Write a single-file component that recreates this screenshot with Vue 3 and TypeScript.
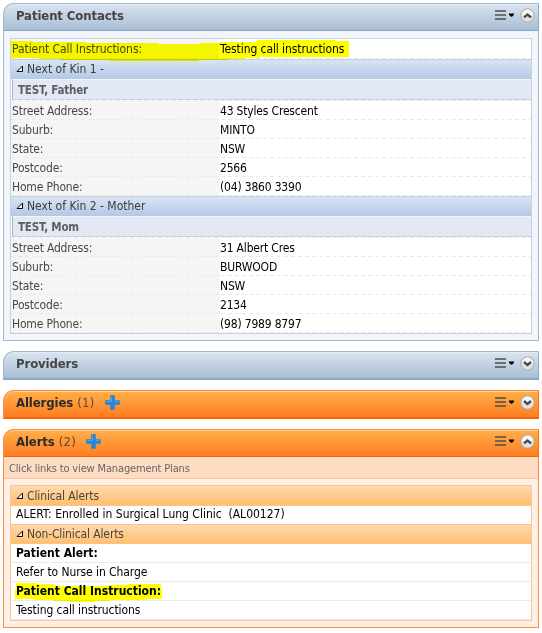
<script setup lang="ts">
interface Field { label: string; value: string }
interface Contact { title: string; name: string; fields: Field[] }

const contacts: Contact[] = [
  {
    title: 'Next of Kin 1 -',
    name: 'TEST, Father',
    fields: [
      { label: 'Street Address:', value: '43 Styles Crescent' },
      { label: 'Suburb:', value: 'MINTO' },
      { label: 'State:', value: 'NSW' },
      { label: 'Postcode:', value: '2566' },
      { label: 'Home Phone:', value: '(04) 3860 3390' },
    ],
  },
  {
    title: 'Next of Kin 2 - Mother',
    name: 'TEST, Mom',
    fields: [
      { label: 'Street Address:', value: '31 Albert Cres' },
      { label: 'Suburb:', value: 'BURWOOD' },
      { label: 'State:', value: 'NSW' },
      { label: 'Postcode:', value: '2134' },
      { label: 'Home Phone:', value: '(98) 7989 8797' },
    ],
  },
]

interface Panel { key: string; title: string; count?: string; tone: 'blue' | 'orange'; open: boolean }
const panels: Panel[] = [
  { key: 'contacts', title: 'Patient Contacts', tone: 'blue', open: true },
  { key: 'providers', title: 'Providers', tone: 'blue', open: false },
  { key: 'allergies', title: 'Allergies', count: '(1)', tone: 'orange', open: false },
  { key: 'alerts', title: 'Alerts', count: '(2)', tone: 'orange', open: true },
]
</script>

<template>
  <main class="page">
    <section v-for="p in panels" :key="p.key" class="panel" :class="[p.tone, p.key, { open: p.open }]">
      <header class="head">
        <h2>{{ p.title }}</h2>
        <span v-if="p.count" class="count">{{ p.count }}</span>
        <svg v-if="p.count" class="plus" width="15" height="15" viewBox="0 0 15 15">
          <path d="M5.500 .5h4v5h5v4h-5v5h-4v-5h-5v-4h5z" fill="#2087e0" stroke="#5f86a8" />
          <path d="M6.500 2v4.500h-4.500M10 6.500h3.500" fill="none" stroke="#45a8f0" />
        </svg>
        <svg class="menu" width="20" height="10" viewBox="0 0 20 10">
          <path d="M0 1h11M0 5h11M0 9h11" stroke="#4c4c50" stroke-width="1.300" />
          <path d="M14 3.500h5v1.200l-2 2h-1l-2-2z" fill="#000" />
        </svg>
        <svg class="toggle" width="15" height="15" viewBox="0 0 15 15">
          <circle cx="7.500" cy="7.500" r="6.700" fill="#e2e2e2" stroke="#aaa" />
          <path d="M2 7a5.500 5.500 0 0 1 11 0z" fill="#f6f6f6" />
          <path :d="p.open ? 'M4 9.400l3.500-2.900 3.500 2.900' : 'M4 6l3.500 2.900 3.500-2.900'" fill="none" stroke="#484848" stroke-width="2.300" />
        </svg>
      </header>

      <div v-if="p.key === 'contacts'" class="body">
        <div class="box">
          <div class="field first">
            <span class="label">Patient Call Instructions:</span><span class="value">Testing call instructions</span>
            <svg class="mark mark-top" width="338" height="21" viewBox="0 0 338 21">
              <path d="M0 1h22v1h24v0h29v1h23v0h49v1h42v-1h20v-1h37v-2h78v1h14v16h-89v1h-16v1h-16v1h-29v1H98v-1H49v-1H28v-1H0z" fill="#ff0" />
            </svg>
          </div>
          <template v-for="c in contacts" :key="c.title">
            <div class="group">
              <svg class="tri" width="8" height="8" viewBox="0 0 8 8"><path d="M1 6.500h5.500V1z" fill="#fff" stroke="#000" /></svg>
              <span>{{ c.title }}</span>
            </div>
            <div class="name"><span>{{ c.name }}</span></div>
            <div class="fields">
              <div v-for="f in c.fields" :key="f.label" class="field">
                <span class="label">{{ f.label }}</span><span class="value">{{ f.value }}</span>
              </div>
            </div>
          </template>
        </div>
      </div>

      <div v-if="p.key === 'alerts'" class="body">
        <p class="notice">Click links to view Management Plans</p>
        <div class="box">
          <div class="group">
            <svg class="tri" width="8" height="8" viewBox="0 0 8 8"><path d="M1 6.500h5.500V1z" fill="#fff" stroke="#000" /></svg>
            <span>Clinical Alerts</span>
          </div>
          <div class="clinical"><span>ALERT: Enrolled in Surgical Lung Clinic&nbsp; (AL00127)</span></div>
          <div class="group">
            <svg class="tri" width="8" height="8" viewBox="0 0 8 8"><path d="M1 6.500h5.500V1z" fill="#fff" stroke="#000" /></svg>
            <span>Non-Clinical Alerts</span>
          </div>
          <div class="line strong"><span>Patient Alert:</span></div>
          <div class="line"><span>Refer to Nurse in Charge</span></div>
          <div class="line strong">
            <span>Patient Call Instruction:</span>
            <svg class="mark mark-low" width="147" height="20" viewBox="0 0 147 20">
              <path d="M1 0h21v1h16v2h55v-1h20v-1h33v6h1v9h-15v1h-38v1H80v1H55v-1H39v-1H20v-1H0V7h1z" fill="#ff0" />
            </svg>
          </div>
          <div class="line"><span>Testing call instructions</span></div>
        </div>
      </div>
    </section>
  </main>
</template>

<style>
body { background: #fff; }
</style>

<style scoped>
* { box-sizing: border-box; }
.page {
  width: 542px; height: 633px; padding: 3px 3px 0; overflow: hidden;
  display: flex; flex-direction: column;
  font: 12px/18px Tahoma, "DejaVu Sans Condensed", "Noto Sans", sans-serif;
  color: #000; letter-spacing: -.08px; white-space: nowrap;
}
.panel { margin-bottom: 10px; }
.head {
  height: 29px; padding: 0 4px 3px 12px; display: flex; align-items: center;
  border-radius: 11px 0 0 0; border: 1px solid #a4b8cd; border-bottom: 2px solid #8ca7c4; border-right-color: #8ca7c4;
  background: linear-gradient(#d9e4f0, #a9bdd3);
  box-shadow: inset 0 1px #e3ebf4;
}
.open .head { height: 28px; border-bottom-width: 1px; }
.blue.open { height: 338px; }
.orange .head { border-color: #ff8a3c #ff6a10 #ff6200 #ff8a3c; background: linear-gradient(#ffb04a, #ff7d22); box-shadow: inset 0 1px #ffd09a; }
h2 { margin: 0; font-size: 13px; line-height: 20px; font-weight: bold; color: #444; letter-spacing: -.1px; }
.orange h2 { color: #2b2b2b; }
.count { margin-left: 4px; font-size: 13px; color: #5a4a3c; letter-spacing: .3px; }
.plus { margin-left: 10px; }
.menu { margin-left: auto; margin-top: -2px; }
.toggle { margin-left: 5px; margin-right: -.5px; }
.body { border: 1px solid #a3bad3; border-top: 0; background: #f2f6fc; padding: 7px 6px; }
.blue .body { height: 310px; }
.orange .body { height: 171px; border-color: #ff8a3c; background: #fff0e6; padding: 0; }
.box { border: 1px solid #c6d3df; background: #fff; }
.field { position: relative; display: flex; height: 19px; }
.fields .field { line-height: 20px; letter-spacing: -.18px; }
.field::after, .fields::before {
  content: ""; display: block; height: 1px;
  background: repeating-linear-gradient(90deg, #e9e9e9 0 4px, transparent 4px 7px);
}
.field::after { position: absolute; left: 0; right: 0; bottom: 0; }
.field.first { height: 20px; padding-top: 1px; background: linear-gradient(90deg, #f5f5f5 208px, #fff 208px); }
.label { width: 209px; padding-left: 1px; background: #f5f5f5; color: #484848; }
.value { width: 311px; }
.first .label { background: none; letter-spacing: -.06px; }
.first .value { letter-spacing: -.08px; }
.mark { position: absolute; mix-blend-mode: multiply; z-index: 2; }
.mark-top { left: 0; top: 1px; }
.group {
  display: flex; align-items: center; height: 20px; padding: 0 0 0 5px;
  border-top: 1px solid #c3d0dd; border-bottom: 1px solid #b6c9df;
  background: linear-gradient(#d9e4f3, #b4cae8); color: #3c3c3c; letter-spacing: 0;
}
.group .tri { margin-right: 3px; }
.name {
  height: 21px; margin-left: 1px; padding-left: 5px; line-height: 20px; border-left: 1px solid #9fb4cb;
  border-top: 1px solid #f3f5f7; border-bottom: 1px solid #c6d0de;
  background: #e2e8f4; color: #5d5d62; font-weight: bold; font-size: 11.500px; letter-spacing: -.2px;
}
.notice {
  height: 22px; margin: 0 0 6px; padding: 1px 0 0 5px; line-height: 21px; border-bottom: 1px solid #ffc29a;
  background: #fddcc4; color: #666; font-size: 11px; letter-spacing: -.15px;
}
.orange .box { margin: 0 6px; border-color: #ffc29a; }
.orange .group { border-color: #ffc08a; background: linear-gradient(#ffd9ad, #ffc070); color: #4a4540; letter-spacing: -.12px; }
.orange .group:first-child { border-top: 0; }
.clinical { height: 18px; padding-left: 5px; line-height: 17px; letter-spacing: 0; }
.line { position: relative; height: 19px; padding-left: 5px; border-bottom: 1px solid #ebebeb; }
.strong { font-weight: bold; letter-spacing: 0; }
.mark-low { left: 4px; top: 1px; }
</style>
